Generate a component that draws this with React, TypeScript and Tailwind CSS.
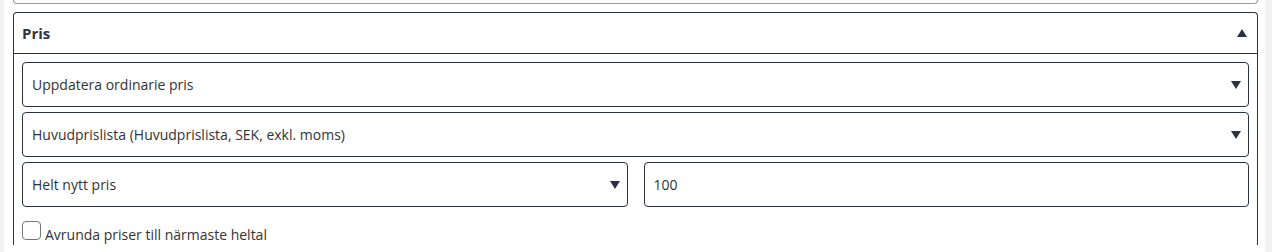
import {useState} from "react";

function Caret({up = false}: {up?: boolean}) {
    return (
        <svg width="10" height="8" viewBox="0 0 10 8" aria-hidden="true" className="shrink-0 fill-[#2b3044]">
            {up ? <polygon points="5,0 10,8 0,8" /> : <polygon points="0,0 10,0 5,8" />}
        </svg>
    );
}

function SelectBox({label}: {label: string}) {
    return (
        <div className="flex h-[45px] items-center justify-between rounded-[4px] border border-[#2b3044] bg-white pl-[9px] pr-[7px] text-[14px] text-[#333]">
            <span>{label}</span>
            <Caret />
        </div>
    );
}

export default function App() {
    const [round, setRound] = useState(false);

    return (
        <div className="flex h-[252px] bg-[#f2f2f2] font-['Open_Sans',sans-serif] overflow-hidden">
            <div className="w-[4px] shrink-0" />
            <div className="flex-1 bg-white pl-[9px] pr-[7px]">
                <div className="h-[4px] rounded-b-[4px] border-x border-b border-[#9a9a9a]" />

                <div className="mt-[8px] rounded-t-[4px] border border-b-0 border-[#2b3044]">
                    <div className="flex h-[41px] items-center justify-between border-b border-[#2b3044] pl-[8px] pr-[10px]">
                        <span className="text-[15px] font-bold text-[#2e3345]">Pris</span>
                        <Caret up />
                    </div>

                    <div className="flex flex-col gap-[5px] px-[8px] pt-[8px]">
                        <SelectBox label="Uppdatera ordinarie pris" />
                        <SelectBox label="Huvudprislista (Huvudprislista, SEK, exkl. moms)" />
                        <div className="grid grid-cols-2 gap-4">
                            <SelectBox label="Helt nytt pris" />
                            <div className="flex h-[45px] items-center rounded-[4px] border border-[#2b3044] pl-[9px] text-[14px] text-[#333]">
                                100
                            </div>
                        </div>

                        <label className="mt-[9px] flex items-baseline gap-[4px] text-[14px] text-[#333]">
                            <span
                                onClick={() => setRound(!round)}
                                className="block h-[19px] w-[19px] rounded-[4px] border border-[#767676] bg-white"
                            />
                            <span>Avrunda priser till närmaste heltal</span>
                        </label>
                    </div>
                </div>
            </div>
            <div className="w-[7px] shrink-0" />
        </div>
    );
}
